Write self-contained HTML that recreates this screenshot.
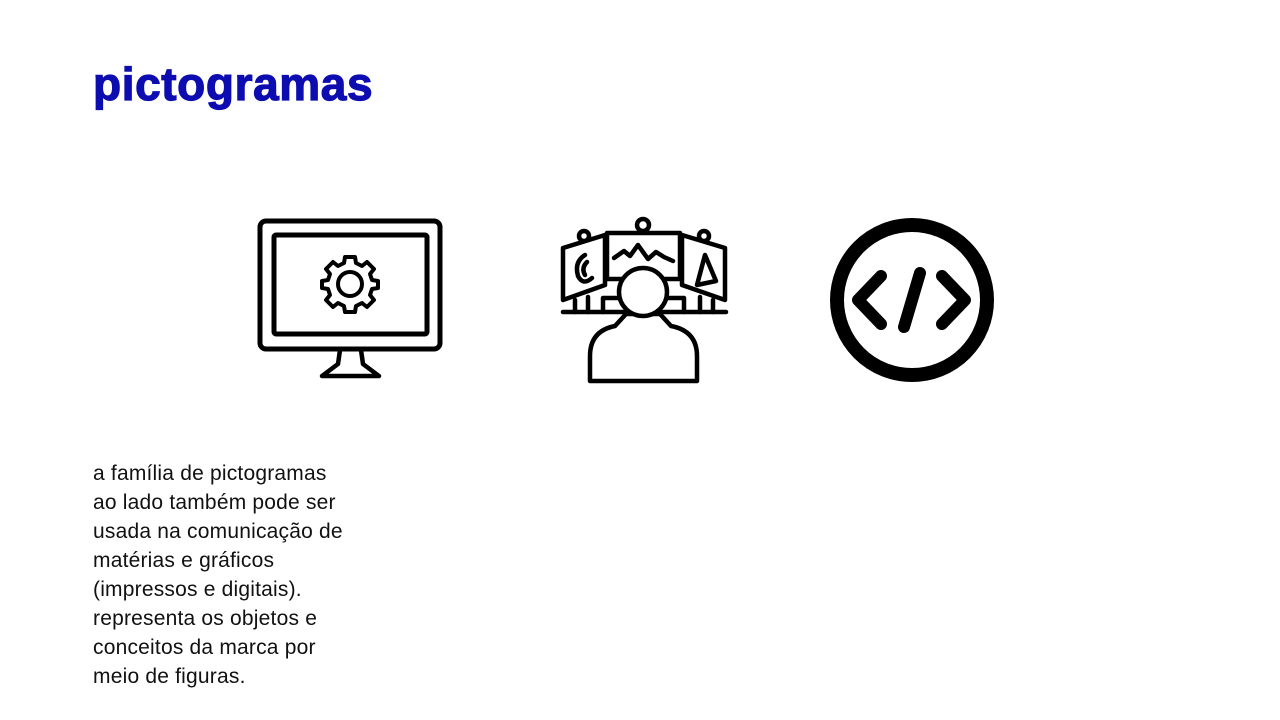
<!DOCTYPE html>
<html><head><meta charset="utf-8"><style>
body{margin:0;width:1280px;height:720px;background:#fff;position:relative;overflow:hidden;font-family:"Liberation Sans",sans-serif}
h1{position:absolute;left:93px;top:57px;margin:0;font-size:46px;font-weight:bold;color:#0c0cb0;letter-spacing:0.6px;-webkit-text-stroke:1.2px #0c0cb0}
.t{position:absolute;left:93px;top:459px;font-size:21px;line-height:29px;color:#111;white-space:nowrap;letter-spacing:0.2px}
svg{position:absolute;left:0;top:0}
</style></head><body>
<h1>pictogramas</h1>
<svg width="1280" height="720" fill="none" stroke="#000" stroke-linejoin="round" stroke-linecap="round">
<rect x="260" y="221" width="180" height="128" rx="6" stroke-width="5"/>
<rect x="274" y="235" width="153" height="99" rx="2" stroke-width="5"/>
<path d="M340 350 L338 364 L322 376 L379 376 L363 364 L361 350" stroke-width="4.5"/>
<g transform="translate(350,284)" stroke-width="4">
<circle r="12"/>
<path d="M-5 -27 L5 -27 L6 -21 L12 -18 L17 -22 L24 -15 L20 -10 L22 -4 L28 -3 L28 4 L22 5 L20 11 L24 16 L17 23 L12 19 L6 22 L5 28 L-5 28 L-6 22 L-12 19 L-17 23 L-24 16 L-20 11 L-22 5 L-28 4 L-28 -3 L-22 -4 L-20 -10 L-24 -15 L-17 -22 L-12 -18 L-6 -21 Z"/>
</g>
<g stroke-width="4.5">
<circle cx="643" cy="225" r="6"/>
<circle cx="584" cy="236" r="5"/>
<circle cx="704" cy="236" r="5"/>
<rect x="607" y="233" width="73" height="46"/>
<path d="M605 235 L563 248 L563 300 L605 285 Z"/>
<path d="M682 235 L725 248 L725 300 L682 285 Z"/>
<path d="M563 312 L726 312"/>
<path d="M575 300 V312 M588 297 V312 M700 297 V312 M713 300 V312"/>
<path d="M603 312 V298 H618 M684 312 V298 H668"/>
<path d="M615 326 Q590 331 590 356 V381 H697 V356 Q697 331 671 326 L660 314 L626 314 Z" fill="#fff"/>
<circle cx="643" cy="292" r="24" fill="#fff"/>
<path d="M614 258 L624 251 L630 256 L638 245 L648 259 L656 252 L664 257 L673 261"/>
<path d="M585 255 Q574 262 578 276 Q583 286 592 278 M587 262 Q581 268 585 275"/>
<path d="M705 255 L697 285 L716 281 Z"/>
</g>
<circle cx="912" cy="300" r="75" stroke-width="14"/>
<path d="M881 276 L858 300 L881 324 M942 276 L965 300 L942 324 M920 273 L904 327" stroke-width="12"/>
</svg>
<div class="t">a família de pictogramas<br>ao lado também pode ser<br>usada na comunicação de<br>matérias e gráficos<br>(impressos e digitais).<br>representa os objetos e<br>conceitos da marca por<br>meio de figuras.</div>
</body></html>
